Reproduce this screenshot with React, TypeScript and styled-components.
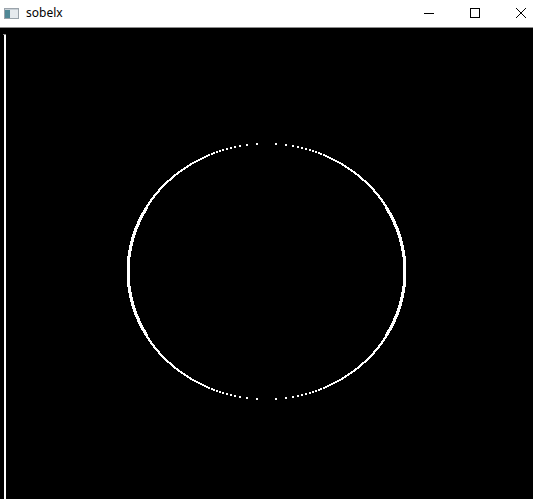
import React from 'react';
import styled, { createGlobalStyle } from 'styled-components';

const GlobalStyle = createGlobalStyle`
  html, body {
    margin: 0;
    padding: 0;
    background: #000000;
    overflow: hidden;
  }
`;

const Window = styled.div`
  width: 533px;
  height: 499px;
  display: flex;
  flex-direction: column;
  overflow: hidden;
  background: #000000;
`;

const TitleBar = styled.div`
  height: 27px;
  flex: none;
  display: flex;
  align-items: center;
  background: #ffffff;
  border-bottom: 1px solid #8c8c8c;
  overflow: hidden;
`;

const AppIcon = styled.svg`
  flex: none;
  margin-left: 4px;
  margin-top: -1px;
`;

const Title = styled.span`
  margin-left: 7px;
  font-family: 'Noto Sans', 'Open Sans', sans-serif;
  font-size: 12px;
  color: #000000;
  flex: 1;
  margin-top: -2px;
`;

const Captions = styled.div`
  display: flex;
  height: 100%;
  margin-right: -11px;
`;

const CaptionButton = styled.div`
  width: 46px;
  height: 100%;
  display: flex;
  align-items: center;
  justify-content: center;
  padding-bottom: 2px;
  box-sizing: border-box;
`;

const Client = styled.div`
  flex: 1;
  background: #000000;
`;

const Canvas = styled.svg`
  display: block;
`;

const cx = 266.5;
const cy = 271.5;
const rx = 139;
const ry = 128;

// sobel-x style response: one blob at the end of each horizontal run of the outline,
// mirrored so the top and bottom gaps match
const edgeDots = (() => {
  const dots: { x: number; y: number; w: number }[] = [];
  for (let k = 0; k < ry; k += 1) {
    const dy = ry - (k + 0.3);
    const t = dy / ry;
    const dx = rx * Math.sqrt(Math.max(0, 1 - t * t));
    const w = t < 0.5 ? 3 : 2;
    const left = Math.round(cx - dx) - 1;
    const right = Math.round(cx + dx) - (w - 1);
    const rows = [Math.round(cy - dy) - 1, Math.round(cy + dy) - 1];
    rows.forEach((y) => {
      dots.push({ x: left, y, w });
      dots.push({ x: right, y, w });
    });
  }
  return dots;
})();

export default function App() {
  return (
    <Window>
      <GlobalStyle />
      <TitleBar>
        <AppIcon width="15" height="11" viewBox="0 0 15 11">
          <rect x="0.5" y="0.5" width="14" height="10" fill="#e6eaee" stroke="#9aa3ab" />
          <rect x="1" y="1" width="5" height="9" fill="#4f8795" />
          <rect x="1" y="1" width="13" height="1" fill="#c8d0d6" />
        </AppIcon>
        <Title>sobelx</Title>
        <Captions>
          <CaptionButton>
            <svg width="10" height="10" viewBox="0 0 10 10" shapeRendering="crispEdges">
              <rect x="0" y="5" width="10" height="1" fill="#000" />
            </svg>
          </CaptionButton>
          <CaptionButton>
            <svg width="10" height="10" viewBox="0 0 10 10" shapeRendering="crispEdges">
              <rect x="0.5" y="0.5" width="9" height="9" fill="none" stroke="#000" />
            </svg>
          </CaptionButton>
          <CaptionButton>
            <svg width="10" height="10" viewBox="0 0 10 10">
              <path d="M0 0 L10 10 M10 0 L0 10" stroke="#000" strokeWidth="1" />
            </svg>
          </CaptionButton>
        </Captions>
      </TitleBar>
      <Client>
        <Canvas width="533" height="471" viewBox="0 28 533 471" shapeRendering="crispEdges">
          <rect x="3" y="34" width="3" height="1" fill="#888" />
          <rect x="4" y="35" width="2" height="464" fill="#ffffff" />
          {edgeDots.map((d, i) => (
            <rect key={i} x={d.x} y={d.y} width={d.w} height="2" fill="#ffffff" />
          ))}
        </Canvas>
      </Client>
    </Window>
  );
}
